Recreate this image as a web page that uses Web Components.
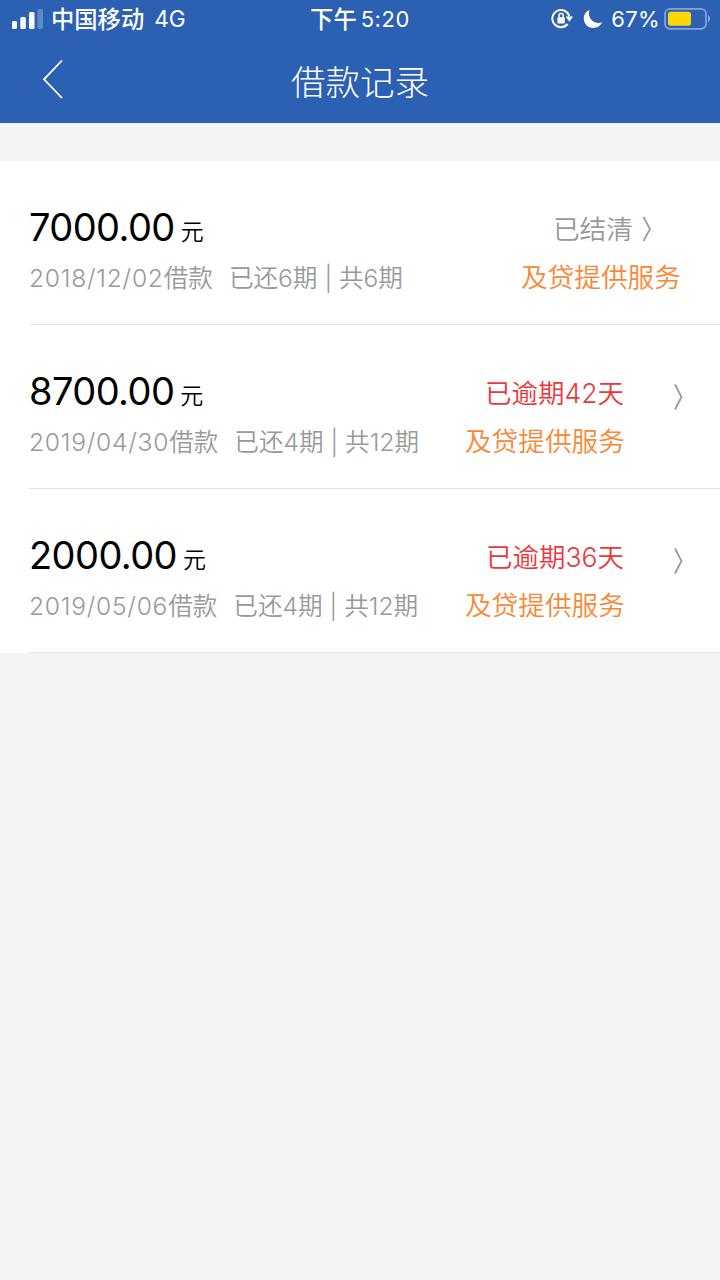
<!DOCTYPE html>
<html lang="zh-CN">
<head>
<meta charset="utf-8">
<title>借款记录</title>
<style>
html,body{margin:0;height:100%}
body{background:#f4f4f4;font-family:Inter,"Noto Sans CJK SC",sans-serif;overflow:hidden}
</style>
</head>
<body>
<loan-app></loan-app>
<script>
const define=(name,html,setup)=>customElements.define(name,class extends HTMLElement{
  connectedCallback(){
    if(this.shadowRoot)return;
    const t=document.createElement('template');
    t.innerHTML=html;
    this.attachShadow({mode:'open'}).append(t.content.cloneNode(true));
    if(setup)setup(this,this.shadowRoot);
  }
});

define('status-bar',`<style>
:host{display:grid;grid-template-columns:1fr auto 1fr;height:38px;align-items:center;color:#fff;font-size:22px;font-weight:400;line-height:38px;white-space:nowrap}
.left,.right{display:flex;align-items:center;height:38px}
.left{padding-left:11px}
.right{justify-content:flex-end;padding-right:9px}
.carrier{margin-left:7px;font-size:23.3px;font-weight:450;padding-top:2px}
.net{margin-left:10px;font-size:22.6px}
.time{display:flex;letter-spacing:.55px}
.time i{font-style:normal;font-size:23.3px;font-weight:450;margin-right:4px;padding-top:1px;height:37px;letter-spacing:0}
.pct{letter-spacing:.35px}
svg{display:block;flex:none}
</style>
<div class="left">
<svg width="33" height="22" viewBox="0 0 33 22" fill="#fff"><rect x="1" y="13" width="5" height="8" rx="1.5"/><rect x="9.3" y="9" width="5.5" height="12" rx="1.5"/><rect x="18" y="4" width="5.5" height="17" rx="1.5"/><rect x="26.5" y="1" width="5.5" height="20" rx="1.5" opacity=".25"/></svg>
<span class="carrier">中国移动</span><span class="net">4G</span></div>
<div class="time"><i>下午</i>5:20</div>
<div class="right">
<svg width="22" height="22" viewBox="0 0 22 22" fill="none" stroke="#fff" stroke-width="2"><path d="M16.6 16A8.6 8.6 0 1 1 18.3 8.5"/><path d="M14.6 8.4h7.4l-3.6 5.4z" fill="#fff" stroke="none"/><rect x="6.4" y="9.2" width="7.4" height="6.2" rx="1" fill="#fff" stroke="none"/><path d="M8 9.8V7.6a2.1 2.1 0 0 1 4.2 0v2.2" stroke-width="1.5"/></svg>
<svg style="margin:0 8px 0 10px" width="20" height="20" viewBox="0 0 20 20" fill="#fff"><path d="M6.6.8C3 2.3.8 5.7.8 9.5c0 5.3 4.2 9.5 9.5 9.5 3.9 0 7.3-2.3 8.8-5.7-1 .4-2.2.6-3.4.6-5.3 0-9.8-4.2-9.8-9.5 0-1.3.2-2.5.7-3.6z"/></svg>
<span class="pct">67%</span>
<svg style="margin-left:4px" width="47" height="24" viewBox="0 0 47 24"><rect x="1" y="1.8" width="41" height="20" rx="5" fill="none" stroke="#83a4d8" stroke-width="1.8"/><rect x="4" y="4.8" width="23" height="14" rx="2.5" fill="#ffd60a"/><path d="M44 8.3q2.2.8 2.2 3.5T44 15.3z" fill="#83a4d8"/></svg>
</div>`);

define('nav-bar',`<style>
:host{display:grid;grid-template-columns:120px 1fr 120px;height:85px;align-items:center;color:#fff}
svg{display:block;margin-left:41px;margin-top:-4px}
h1{margin:0;text-align:center;font-size:34.5px;font-weight:300;line-height:50px;padding-top:4px}
</style>
<svg width="24" height="42" viewBox="0 0 24 42" fill="none" stroke="#fff" stroke-width="1.8"><path d="M21 2.5 3 21.3 21 40"/></svg>
<h1><slot></slot></h1>`);

define('loan-record',`<style>
:host{display:flex;box-sizing:border-box;height:164px;margin-left:29px;border-bottom:1px solid #e3e3e3;white-space:nowrap;justify-content:space-between;font-weight:350}
.main{padding-top:41px}
.amount{height:50px;line-height:50px;font-size:38px;color:#000;letter-spacing:-.58px;display:flex}
.a{font-weight:400}
.amount small{font-size:23px;letter-spacing:0;margin-left:6px;padding-top:5px;height:45px}
.info{height:50px;line-height:52px;font-size:24.6px;color:#999;display:flex}
.date{margin-right:16px}
.num{letter-spacing:.75px}
.side{display:flex;padding-right:39px}
:host([overdue]) .side{padding-right:36px}
.text{padding-top:44px;text-align:right;font-size:26.7px}
.state{height:48px;line-height:48px;color:#999;display:flex;justify-content:flex-end;align-items:center}
.state svg{margin:0 29px 0 9px}
.service{height:48px;line-height:48px;color:#fb8735}
:host([overdue]) .state{color:#ee363a;font-size:26.5px;padding-right:1px}
.go{display:none;margin:58px 0 0 48px}
:host([overdue]) .go{display:block}
:host([overdue]) .state svg{display:none}
</style>
<div class="main"><div class="amount"><span class="a"></span><small>元</small></div>
<div class="info"><span class="date"><span class="num"></span>借款</span><span class="prog"></span></div></div>
<div class="side"><div class="text"><div class="state"><slot></slot><svg width="10" height="26" viewBox="0 0 10 26" fill="none" stroke="#999" stroke-width="1.7"><path d="M1.5 1 8 13 1.5 25"/></svg></div><div class="service">及贷提供服务</div></div>
<svg class="go" width="11" height="28" viewBox="0 0 11 28" fill="none" stroke="#999" stroke-width="1.8"><path d="M2 1.5 8.5 14 2 26.5"/></svg></div>`,
(host,root)=>{
  root.querySelector('.a').textContent=host.getAttribute('amount');
  root.querySelector('.num').textContent=host.getAttribute('date');
  root.querySelector('.prog').textContent=`已还${host.getAttribute('paid')}期 | 共${host.getAttribute('total')}期`;
});

define('loan-app',`<style>
:host{display:block;width:720px;height:1280px;background:#f4f4f4}
header{background:#2b60b2;height:123px}
main{background:#fff;margin-top:38px;height:492px}
</style>
<header><status-bar></status-bar><nav-bar>借款记录</nav-bar></header>
<main>
<loan-record amount="7000.00" date="2018/12/02" paid="6" total="6">已结清</loan-record>
<loan-record overdue amount="8700.00" date="2019/04/30" paid="4" total="12">已逾期42天</loan-record>
<loan-record overdue amount="2000.00" date="2019/05/06" paid="4" total="12">已逾期36天</loan-record>
</main>`);
</script>
</body>
</html>
